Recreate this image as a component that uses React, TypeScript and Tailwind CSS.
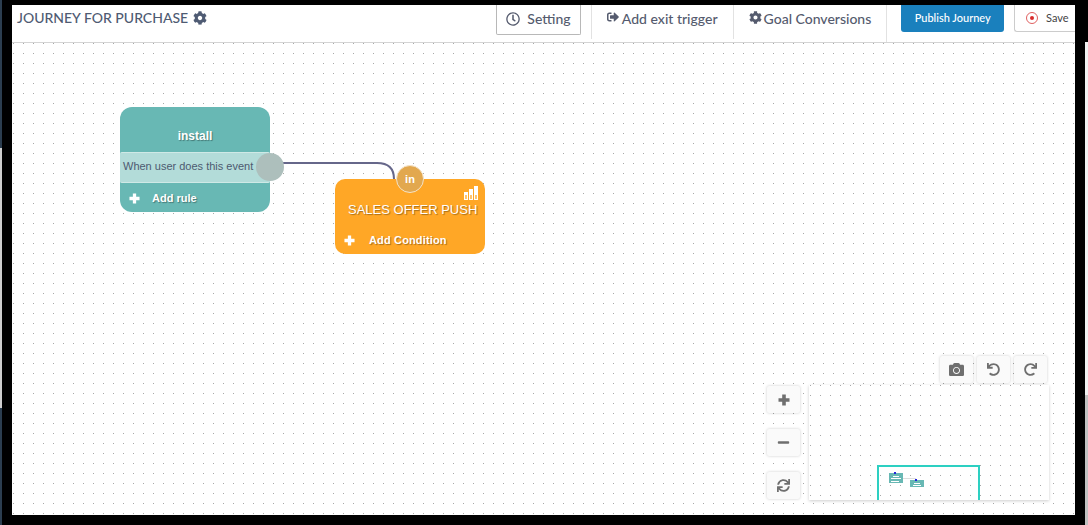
import { FaCog, FaCamera, FaMinus, FaSync, FaUndo, FaRedo, FaRegClock, FaSignOutAlt } from "react-icons/fa";

const dots =
  "bg-[radial-gradient(circle_at_1.5px_0.5px,#a8a8a8_0.55px,transparent_0.7px)] bg-[size:10px_10px]";

// FA4 style plus, heavier than the one in the icon package
const Plus = ({ size = 11 }: { size?: number }) => (
  <svg width={size} height={size} viewBox="0 0 12 12" fill="currentColor" className="shrink-0">
    <path d="M4.2 0.5h3.6v3.7h3.7v3.6H7.8v3.7H4.2V7.8H0.5V4.2h3.7z" />
  </svg>
);

const ToolButton = ({ children }: { children: React.ReactNode }) => (
  <div className="flex h-[27px] w-[33px] items-center justify-center rounded-[2px] bg-[#fafafa] text-[#6f6f6f] shadow-[0_0_3px_rgba(0,0,0,0.2)]">
    {children}
  </div>
);

const MiniMap = () => (
  <div className={`relative h-[115px] w-[240px] overflow-hidden bg-white shadow-[0_1px_3px_rgba(0,0,0,0.2)] ${dots}`}>
    <div className="absolute left-[68px] top-[80px] h-[60px] w-[103px] border-2 border-[#2dd0c2]" />
    <div className="absolute left-[80px] top-[88px] h-[10px] w-[14px] bg-[#68b8b4]" />
    <div className="absolute left-[101px] top-[95px] h-[7px] w-[14px] bg-[#68b8b4]" />
    <div className="absolute left-[94px] top-[93px] h-px w-[13px] bg-[#dddddd]" />
    <div className="absolute left-[84px] top-[91px] h-px w-[6px] bg-white" />
    <div className="absolute left-[82px] top-[93px] h-px w-[10px] bg-white" />
    <div className="absolute left-[82px] top-[96px] h-px w-[8px] bg-white" />
    <div className="absolute left-[105px] top-[98px] h-px w-[6px] bg-white" />
    <div className="absolute left-[104px] top-[100px] h-px w-[8px] bg-white" />
    <div className="absolute left-[85px] top-[87px] h-[2px] w-[2px] bg-[#2222dd]" />
    <div className="absolute left-[106px] top-[94px] h-[2px] w-[2px] bg-[#2222dd]" />
  </div>
);

export default function App() {
  return (
    <div className="flex h-[525px] w-[1088px] overflow-hidden bg-black font-['Lato',sans-serif]">
      {/* edge of the window behind */}
      <div className="flex w-[2px] shrink-0 flex-col bg-[#2c3e50]">
        <div className="mt-[148px] h-[260px] bg-[#cfcfcf]" />
      </div>
      <div className="ml-[10px] mt-[5px] flex h-[510px] w-[1063px] shrink-0 flex-col bg-white">
        <header className="flex h-[38px] shrink-0 items-start border-b border-[#d4d4d4] bg-white text-[#555b6e]">
          <div className="flex h-full w-[484px] shrink-0 items-start pl-[5px] pt-[4px] text-[14px] font-medium leading-[18px] text-[#4f5b73]">
            JOURNEY FOR PURCHASE
            <FaCog className="ml-[5px] mt-[2px] text-[14px]" />
          </div>
          <div className="flex h-[30px] w-[85px] items-center justify-center gap-[7px] rounded-b-[2px] border border-t-0 border-[#b8b8b8] pb-[2px] text-[14px] font-medium">
            <FaRegClock className="text-[14px]" /> Setting
          </div>
          <div className="ml-[10px] flex h-[34px] w-[143px] items-start justify-center gap-[3px] border-x border-[#e2e2e2] pt-[3px] text-[14px] font-medium">
            <FaSignOutAlt className="mt-[3px] text-[12px]" /> Add exit trigger
          </div>
          <div className="flex h-[37px] w-[154px] items-start justify-center gap-[2px] border-r border-[#e2e2e2] pt-[3px] text-[14px] font-medium">
            <FaCog className="mt-[3px] text-[13px]" /> Goal Conversions
          </div>
          <div className="ml-[14px] flex h-[27px] w-[103px] items-center justify-center rounded-b-[3px] bg-[#1a80bd] text-[11px] font-medium text-white">
            Publish Journey
          </div>
          <div className="ml-[10px] flex h-[27px] w-[61px] items-center gap-[8px] rounded-bl-[3px] border border-r-0 border-t-0 border-[#cccccc] pl-[11px] text-[11px] text-[#444444]">
            <span className="flex h-[12px] w-[12px] shrink-0 items-center justify-center rounded-full border border-[#e06060]">
              <span className="h-[4px] w-[4px] rounded-full bg-[#d82c2c]" />
            </span>
            Save
          </div>
        </header>
        <main className={`relative flex-1 overflow-hidden bg-white ${dots}`}>
          {/* connector */}
          <svg className="absolute left-[260px] top-[110px]" width="140" height="40" fill="none">
            <path d="M10 10 H105 Q122 10 122 26 V35" stroke="#66678a" strokeWidth="2" />
          </svg>

          {/* install node */}
          <div className="absolute left-[108px] top-[64px] flex h-[105px] w-[150px] flex-col rounded-[12px] bg-[#68b8b4] font-['Liberation_Sans',sans-serif] text-white">
            <div className="flex h-[45px] items-end justify-center pb-[7px] text-[12px] font-bold [text-shadow:1px_1px_1px_rgba(0,0,0,0.35)]">
              install
            </div>
            <div className="flex h-[31px] items-center rounded-[2px] border-y border-[#cfe9e6] bg-[#b3dcd9] pb-[2px] pl-[3px] text-[11px] text-[#4d5a70]">
              When user does this event
            </div>
            <div className="flex flex-1 items-center gap-[12px] pl-[9px] pt-[2px] text-[11px] font-bold [text-shadow:1px_1px_1px_rgba(0,0,0,0.35)]">
              <Plus /> Add rule
            </div>
          </div>
          <div className="absolute left-[244px] top-[110px] h-[28px] w-[28px] rounded-full bg-[#adbfbc]" />

          {/* push node */}
          <div className="absolute left-[323px] top-[136px] flex h-[75px] w-[150px] flex-col rounded-[10px] bg-[#ffa726] font-['Liberation_Sans',sans-serif] text-white">
            <div className="mt-[22px] whitespace-nowrap pl-[13px] text-[13px] leading-[18px] [text-shadow:1px_1px_1px_rgba(0,0,0,0.35)]">
              SALES OFFER PUSH
            </div>
            <div className="mt-[13px] flex items-center gap-[14px] pl-[9px] text-[11px] font-bold tracking-[0.15px] [text-shadow:1px_1px_1px_rgba(0,0,0,0.35)]">
              <Plus /> Add Condition
            </div>
          </div>
          <svg className="absolute left-[452px] top-[142px]" width="16" height="15" fill="#ffffff">
            <rect x="0" y="7" width="4" height="8" />
            <rect x="5" y="4" width="4" height="11" />
            <rect x="10" y="1" width="4" height="14" />
            <rect x="1" y="10" width="2" height="4" fill="#ffc56e" />
            <rect x="6" y="10" width="2" height="4" fill="#ffc56e" />
            <rect x="11" y="10" width="2" height="4" fill="#ffc56e" />
          </svg>
          <div className="absolute left-[384px] top-[122px] flex h-[28px] w-[28px] items-center justify-center rounded-full border border-[#f5e3c8] bg-[#e2a84f] font-['Liberation_Sans',sans-serif] text-[11px] font-bold text-white">
            in
          </div>

          {/* map controls */}
          <div className="absolute left-[928px] top-[313px] flex gap-[4px]">
            <ToolButton><FaCamera className="text-[15px]" /></ToolButton>
            <ToolButton><FaUndo className="text-[13px]" /></ToolButton>
            <ToolButton><FaRedo className="text-[13px]" /></ToolButton>
          </div>
          <div className="absolute left-[755px] top-[343px] flex flex-col gap-[16px]">
            <ToolButton><Plus size={12} /></ToolButton>
            <ToolButton><FaMinus className="text-[13px]" /></ToolButton>
            <ToolButton><FaSync className="text-[13px]" /></ToolButton>
          </div>
          <div className="absolute left-[797px] top-[342px]">
            <MiniMap />
          </div>
        </main>
      </div>
      {/* scrollbar of the window behind */}
      <div className="ml-[10px] flex w-[3px] shrink-0 flex-col">
        <div className="h-[42px] shrink-0 bg-black" />
        <div className="h-[353px] shrink-0 bg-[#f1f1f1]" />
        <div className="flex-1 bg-[#c1c1c1]" />
      </div>
    </div>
  );
}
